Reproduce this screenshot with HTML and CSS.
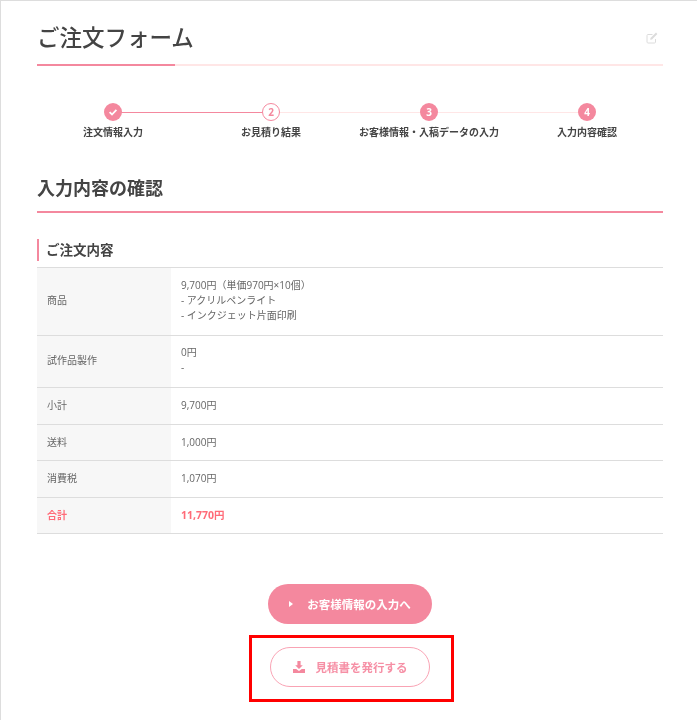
FILE: index.html

```html
<!DOCTYPE html>
<html lang="ja">
<head>
  <meta charset="UTF-8" />
  <title>ご注文フォーム</title>
  <link rel="stylesheet" href="styles.css">
</head>
<body>
  <div class="page">
    <div class="page-head">
      <h1>ご注文フォーム</h1>
      <svg class="edit-icon" viewBox="0 0 12 12" aria-hidden="true">
        <path d="M9.500 7v3a1 1 0 0 1-1 1H2a1 1 0 0 1-1-1V3.500a1 1 0 0 1 1-1h4.500" fill="none" stroke="#dcdcdc" stroke-width="1"/>
        <path d="M4.500 6 10 .6l1.400 1.400L6 7.500l-1.800.3z" fill="#dcdcdc"/>
      </svg>
    </div>

    <ol class="steps">
      <li class="step done">
        <span class="num">
          <svg viewBox="0 0 10 10" aria-hidden="true"><path d="M1.600 5.200 4 7.500l4.400-4.600" fill="none" stroke="#fff" stroke-width="1.800"/></svg>
        </span>
        <span class="label">注文情報入力</span>
      </li>
      <li class="step current">
        <span class="num">2</span>
        <span class="label">お見積り結果</span>
      </li>
      <li class="step">
        <span class="num">3</span>
        <span class="label">お客様情報・入稿データの入力</span>
      </li>
      <li class="step">
        <span class="num">4</span>
        <span class="label">入力内容確認</span>
      </li>
    </ol>

    <h2>入力内容の確認</h2>
    <h3>ご注文内容</h3>

    <table class="order">
      <tr class="tall">
        <th>商品</th>
        <td>9,700円（単価970円×10個）<br>- アクリルペンライト<br>- インクジェット片面印刷</td>
      </tr>
      <tr class="tall">
        <th>試作品製作</th>
        <td>0円<br>-</td>
      </tr>
      <tr><th>小計</th><td>9,700円</td></tr>
      <tr><th>送料</th><td>1,000円</td></tr>
      <tr><th>消費税</th><td>1,070円</td></tr>
      <tr class="total"><th>合計</th><td>11,770円</td></tr>
    </table>

    <div class="actions">
      <a class="btn btn-primary" href="#">
        <svg class="arrow" viewBox="0 0 4 6" aria-hidden="true"><path d="M0 0l4 3-4 3z" fill="#fff"/></svg>
        お客様情報の入力へ
      </a>
      <div class="highlight">
        <a class="btn btn-outline" href="#">
          <svg class="dl" viewBox="0 0 12 12" aria-hidden="true">
            <path d="M4.400 0h3.200v4.200h2.200L6 8 2.200 4.200h2.200z" fill="#f4889e"/>
            <path d="M0 8h3.200L6 10l2.800-2H12v4H0z" fill="#f4889e"/>
          </svg>
          見積書を発行する
        </a>
      </div>
    </div>
  </div>
</body>
</html>
```

FILE: styles.css

```css
* {
  box-sizing: border-box;
}
html, body {
  height: 100%;
}
body {
  margin: 0;
  background: #fff;
  color: #444;
  font-family: 'Open Sans', 'Noto Sans CJK JP', sans-serif;
  overflow: hidden;
}
.page {
  height: 720px;
  padding: 22px 34px 0 36px;
  border-top: 1px solid #ddd;
  border-left: 1px solid #ddd;
  filter: blur(0.4px);
}
.page-head {
  display: flex;
  justify-content: space-between;
  align-items: center;
  height: 43px;
  border-bottom: 2px solid #ffe6e6;
  position: relative;
}
.page-head::after {
  content: "";
  position: absolute;
  left: 0;
  bottom: -2px;
  width: 138px;
  height: 2px;
  background: #f4889e;
}
h1 {
  margin: 0;
  font-size: 22.500px;
  font-weight: 500;
  line-height: 30px;
  position: relative;
  top: -6px;
}
.edit-icon {
  width: 12px;
  height: 12px;
  margin-right: 5px;
  position: relative;
  top: -6px;
}
.steps {
  display: grid;
  grid-template-columns: repeat(4, 158px);
  margin: 37px 0 0 -3px;
  padding: 0;
  list-style: none;
}
.step {
  display: flex;
  flex-direction: column;
  align-items: center;
  position: relative;
}
.step::before {
  content: "";
  position: absolute;
  top: 9px;
  left: 50%;
  width: 100%;
  height: 1px;
  background: #ffe6e6;
}
.step:last-child::before {
  display: none;
}
.step.done::before {
  background: #f4889e;
}
.num {
  display: flex;
  justify-content: center;
  align-items: center;
  width: 18px;
  height: 18px;
  border-radius: 50%;
  background: #f4889e;
  color: #fff;
  font-size: 10px;
  font-weight: 700;
  position: relative;
}
.num svg {
  width: 10px;
  height: 10px;
}
.current .num {
  background: #fff;
  border: 1px solid #f4889e;
  color: #f4889e;
}
.label {
  margin-top: 4px;
  font-size: 10px;
  font-weight: 700;
  line-height: 15px;
  white-space: nowrap;
}
h2 {
  margin: 35px 0 0;
  height: 38px;
  font-size: 18px;
  font-weight: 700;
  line-height: 26px;
  border-bottom: 2px solid #f4889e;
}
h3 {
  margin: 26px 0 0;
  padding-left: 7px;
  height: 22px;
  border-left: 2px solid #f4889e;
  font-size: 13.500px;
  font-weight: 700;
  line-height: 22px;
}
.order {
  width: 100%;
  margin-top: 6px;
  border-collapse: collapse;
  border-top: 1px solid #ddd;
  font-size: 10px;
  line-height: 15px;
  color: #666;
}
.order tr {
  border-bottom: 1px solid #ddd;
}
.order th {
  width: 134px;
  padding: 10.250px 10px;
  background: #f7f7f7;
  font-weight: 400;
  text-align: left;
}
.order td {
  padding: 10.250px 10px;
}
.order .tall th, .order .tall td {
  padding-top: 9.500px;
  padding-bottom: 12px;
}
.total th, .total td {
  color: #ff6b78;
  font-weight: 700;
}
.total td {
  font-size: 10.500px;
}
.actions {
  display: flex;
  flex-direction: column;
  align-items: center;
  margin-top: 50px;
}
.btn {
  display: flex;
  justify-content: center;
  align-items: center;
  height: 40px;
  border-radius: 20px;
  font-size: 11.500px;
  font-weight: 700;
  text-decoration: none;
}
.btn-primary {
  width: 164px;
  background: #f4889e;
  color: #fff;
}
.arrow {
  width: 4px;
  height: 6px;
  margin-right: 14px;
}
.highlight {
  width: 205px;
  margin: 11px 0 0 2px;
  padding: 9px 18px 12px;
  border: 3px solid #f00;
}
.btn-outline {
  width: 160px;
  border: 1px solid #f9a3b4;
  background: #fff;
  color: #f68fa5;
}
.dl {
  width: 12px;
  height: 12px;
  margin-right: 12px;
  position: relative;
  left: 1px;
}
```
